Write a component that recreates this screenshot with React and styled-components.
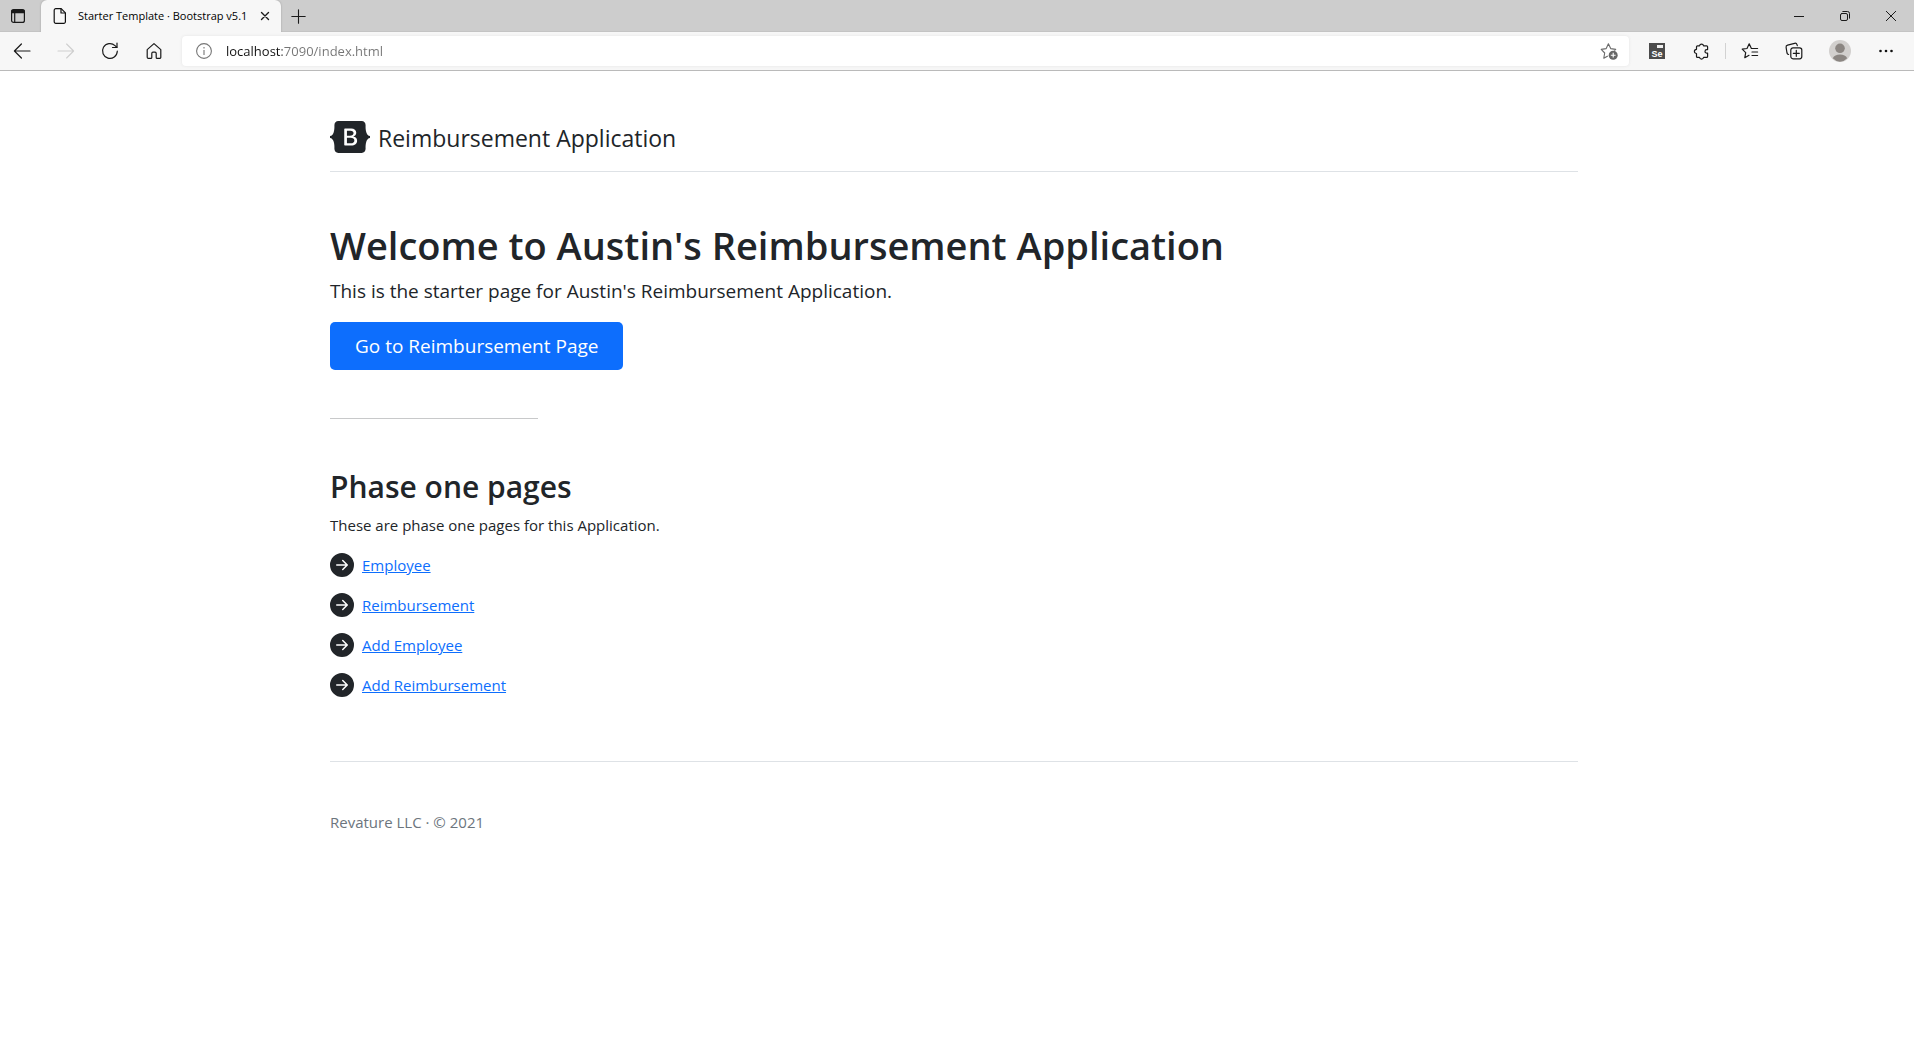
import React from "react";
import styled, { createGlobalStyle } from "styled-components";

const GlobalStyle = createGlobalStyle`
  *, *::before, *::after { box-sizing: border-box; }
  body {
    margin: 0;
    background: #fff;
    color: #212529;
    font-family: "Open Sans", "Noto Sans", sans-serif;
    font-size: 15px;
    line-height: 24px;
  }
  button, input { font: inherit; color: inherit; }
`;

/* ---------- Browser frame ---------- */

const TabStrip = styled.div`
  display: flex;
  height: 32px;
  background: #cdcdcd;
  color: #000;
  box-shadow: inset 0 -1px 0 #c4c4c4;
`;

const IconButton = styled.button`
  display: flex;
  align-items: center;
  justify-content: center;
  flex: none;
  width: ${(p) => p.$width || 44}px;
  padding: 0;
  border: 0;
  background: none;
  color: ${(p) => p.$color || "#1a1a1a"};
  svg { display: block; }
`;

const Tab = styled.div`
  display: flex;
  align-items: center;
  width: 240px;
  margin-left: 5px;
  padding-left: 12px;
  gap: 11px;
  border-radius: 6px 6px 0 0;
  background: #f7f7f7;
  box-shadow: 0 0 2px #9a9a9a;
  clip-path: inset(-2px -2px 0 -2px);
  svg { flex: none; }
`;

const TabTitle = styled.span`
  flex: 1;
  width: 0;
  overflow: visible;
  font-size: 11px;
  white-space: nowrap;
`;

const WindowControls = styled.div`
  display: flex;
  margin-left: auto;
`;

const Toolbar = styled.div`
  display: flex;
  align-items: stretch;
  height: 39px;
  padding-right: 6px;
  border-bottom: 1px solid #bababa;
  background: #f7f7f7;
`;

const AddressBar = styled.div`
  display: flex;
  align-items: center;
  flex: 1;
  height: 30px;
  margin: 4px 6px;
  padding-left: 14px;
  border-radius: 4px;
  background: #fff;
  box-shadow: 0 0 3px #e2e2e2;
`;

const Address = styled.input`
  flex: 1;
  height: 24px;
  margin-left: 14px;
  padding: 0;
  border: 0;
  outline: 0;
  font-size: 13px;
  color: #6f6f6f;
  background: linear-gradient(to right, #111 56px, #757575 56px);
  background-clip: text;
  -webkit-text-fill-color: transparent;
`;

const Separator = styled.span`
  width: 1px;
  height: 16px;
  margin: 11px 2px;
  background: #d2d2d2;
`;

const RecorderBadge = styled.span`
  display: flex;
  flex-direction: column;
  align-items: center;
  justify-content: space-between;
  width: 16px;
  height: 16px;
  padding-top: 2px;
  background: #4b4b4b;
  color: #fff;
  font-family: "Liberation Sans", sans-serif;
  font-size: 9px;
  font-weight: 700;
  line-height: 10px;
  &::before {
    content: "";
    flex: none;
    align-self: flex-end;
    width: 6px;
    height: 3px;
    margin-right: 2px;
    background: #f0f0f0;
  }
`;

const Stroke = ({ size = 16, box = 16, width = 1, children }) => (
  <svg
    width={size}
    height={size}
    viewBox={`0 0 ${box} ${box}`}
    fill="none"
    stroke="currentColor"
    strokeWidth={width}
    strokeLinecap="round"
    strokeLinejoin="round"
    aria-hidden="true"
  >
    {children}
  </svg>
);

const TabActionsIcon = () => (
  <Stroke width={1.2}>
    <rect x="1.6" y="1.6" width="12.8" height="12.8" rx="2" />
    <path d="M2 3.5h12M2 2.5h12M2 4.5h12" strokeWidth="1.4" />
    <path d="M4.7 5v9" />
  </Stroke>
);

const FileIcon = () => (
  <svg width="14" height="18" viewBox="0 0 14 18" fill="none" stroke="#111" strokeWidth="1.2" strokeLinejoin="round" aria-hidden="true">
    <path d="M2.8 1.6h5.4l4.2 4.2v9a1.6 1.6 0 0 1-1.6 1.6h-8a1.6 1.6 0 0 1-1.6-1.6V3.2a1.6 1.6 0 0 1 1.6-1.6z" />
    <path d="M8 1.8V6h4.2" />
  </svg>
);

const BackIcon = () => (
  <Stroke size={18} box={18} width={1.2}>
    <path d="M17 9H1.4M8.4 2 1.4 9l7 7" />
  </Stroke>
);

const ForwardIcon = () => (
  <Stroke size={18} box={18} width={1.1}>
    <path d="M1 9h15.6M9.6 2l7 7-7 7" />
  </Stroke>
);

const ReloadIcon = () => (
  <Stroke size={18} box={18} width={1.2}>
    <path d="M16.3 9.2A7.4 7.4 0 1 1 14 3.6l1.8 1.7" />
    <path d="M16 1v4.5h-4.5" />
  </Stroke>
);

const HomeIcon = () => (
  <Stroke size={18} box={18} width={1.2}>
    <path d="M2.2 7.6 9 1.6l6.8 6v7.6a1.2 1.2 0 0 1-1.2 1.2h-2.4a1 1 0 0 1-1-1v-4a1.2 1.2 0 0 0-1.2-1.2H8a1.2 1.2 0 0 0-1.2 1.2v4a1 1 0 0 1-1 1H3.4a1.2 1.2 0 0 1-1.2-1.2z" />
  </Stroke>
);

const InfoIcon = () => (
  <svg width="16" height="16" viewBox="0 0 16 16" fill="none" stroke="#767676" strokeWidth="1.1" aria-hidden="true">
    <circle cx="8" cy="8" r="7.4" />
    <path d="M8 7v5M8 4v1.5" />
  </svg>
);

const AddFavoriteIcon = () => (
  <svg width="18" height="18" viewBox="0 0 18 18" fill="none" stroke="#6b6b6b" strokeWidth="1.1" strokeLinejoin="round" aria-hidden="true">
    <path d="M7.8 14l-4 2.2.9-5.2L1.2 7.4l5-.8L8.4 1.8l2.3 4.8 5 .8-1.3 1.2" />
    <circle cx="13.2" cy="13.2" r="4.5" fill="#666" stroke="none" />
    <path d="M13.2 10.8v4.8M10.8 13.2h4.8" stroke="#fff" />
  </svg>
);

const ExtensionsIcon = () => (
  <Stroke size={18} box={18} width={1.2}>
    <path d="M5.5 3.8h2a2.1 2.1 0 0 1 4.1 0h3a1 1 0 0 1 1 1v2.8h-.8a1.8 1.8 0 0 0 0 3.6h.8v3.2a1 1 0 0 1-1 1h-3a2.1 2.1 0 0 1-4.1 0h-2a1 1 0 0 1-1-1v-2.9a2.1 2.1 0 0 1 0-4.2V4.8a1 1 0 0 1 1-1z" />
  </Stroke>
);

const FavoritesIcon = () => (
  <Stroke size={18} box={18} width={1.2}>
    <path d="M8 13.3l-4.2 2.4.9-5L1.2 7.2l4.8-.7L8.2 1.8l2.2 4.7h6.2M11 10h5.6M11 13.5h5.6" />
  </Stroke>
);

const CollectionsIcon = () => (
  <Stroke size={18} box={18} width={1.2}>
    <path d="M3.6 12.5A2 2 0 0 1 2 11L1.1 5.4a2 2 0 0 1 1.5-2.3l7-1.8a2 2 0 0 1 2.4 1.3l.3 1.1" />
    <rect x="5.8" y="5.8" width="11" height="11" rx="2.2" />
    <path d="M11.3 8.3v6M8.3 11.3h6" />
  </Stroke>
);

const ProfileIcon = () => (
  <svg width="22" height="22" viewBox="0 0 22 22" aria-hidden="true">
    <circle cx="11" cy="11" r="11" fill="#d2d0ce" />
    <circle cx="11" cy="8.3" r="4.8" fill="#8b8682" />
    <path d="M3.8 18.2C5 15.5 7.5 14.4 11 14.4s6 1.1 7.2 3.8A11 11 0 0 1 11 21.7a11 11 0 0 1-7.2-3.5z" fill="#8b8682" />
  </svg>
);

const MoreIcon = () => (
  <svg width="16" height="16" viewBox="0 0 16 16" fill="#111" aria-hidden="true">
    <circle cx="2.5" cy="8" r="1.3" />
    <circle cx="8" cy="8" r="1.3" />
    <circle cx="13.5" cy="8" r="1.3" />
  </svg>
);

function BrowserFrame() {
  return (
    <header>
      <TabStrip>
        <IconButton $width={36} aria-label="Tab actions"><TabActionsIcon /></IconButton>
        <Tab>
          <FileIcon />
          <TabTitle>Starter Template · Bootstrap v5.1</TabTitle>
          <IconButton $width={32} aria-label="Close tab">
            <Stroke size={10} box={10} width={1.4}><path d="M1.5 1.5l7 7M8.5 1.5l-7 7" /></Stroke>
          </IconButton>
        </Tab>
        <IconButton $width={35} aria-label="New tab">
          <Stroke size={15} box={15} width={1.1}><path d="M7.5 .8v13.4M.8 7.5h13.4" /></Stroke>
        </IconButton>
        <WindowControls>
          <IconButton $width={46} aria-label="Minimize">
            <Stroke size={10} box={10}><path d="M0 5.5h10" /></Stroke>
          </IconButton>
          <IconButton $width={46} aria-label="Restore">
            <Stroke size={10} box={10}>
              <rect x=".5" y="2.5" width="7" height="7" rx="1.5" />
              <path d="M2.8.5h4.7a2 2 0 0 1 2 2v4.7" />
            </Stroke>
          </IconButton>
          <IconButton $width={46} aria-label="Close">
            <Stroke size={10} box={10}><path d="M.3.3l9.4 9.4M9.7.3L.3 9.7" /></Stroke>
          </IconButton>
        </WindowControls>
      </TabStrip>
      <Toolbar>
        <IconButton aria-label="Back"><BackIcon /></IconButton>
        <IconButton aria-label="Forward" $color="#cfcfcf" disabled><ForwardIcon /></IconButton>
        <IconButton aria-label="Refresh"><ReloadIcon /></IconButton>
        <IconButton aria-label="Home"><HomeIcon /></IconButton>
        <AddressBar>
          <InfoIcon />
          <Address aria-label="Address" defaultValue="localhost:7090/index.html" />
          <IconButton $width={40} aria-label="Add this page to favorites"><AddFavoriteIcon /></IconButton>
        </AddressBar>
        <IconButton aria-label="Selenium IDE"><RecorderBadge>Se</RecorderBadge></IconButton>
        <IconButton aria-label="Extensions"><ExtensionsIcon /></IconButton>
        <Separator />
        <IconButton aria-label="Favorites"><FavoritesIcon /></IconButton>
        <IconButton aria-label="Collections"><CollectionsIcon /></IconButton>
        <IconButton $width={48} aria-label="Profile"><ProfileIcon /></IconButton>
        <IconButton aria-label="Settings and more"><MoreIcon /></IconButton>
      </Toolbar>
    </header>
  );
}

/* ---------- Page ---------- */

const Page = styled.div`
  padding-right: 6px;
`;

const Column = styled.div`
  max-width: 1280px;
  margin: 0 auto;
  padding: 48px 16px;
`;

const PageHeader = styled.header`
  margin-bottom: 48px;
  padding-bottom: 16px;
  border-bottom: 1px solid #dee2e6;
`;

const Brand = styled.a`
  display: flex;
  align-items: center;
  gap: 8px;
  height: 36px;
  color: #212529;
  font-size: 23px;
  line-height: 32px;
  text-decoration: none;
  svg { flex: none; }
  span { padding-top: 2px; }
`;

const Title = styled.h1`
  margin: 0 0 6px;
  font-size: 38px;
  font-weight: 600;
  line-height: 50px;
`;

const Lead = styled.p`
  margin: 0 0 16px;
  font-size: 19px;
  line-height: 30px;
`;

const PrimaryButton = styled.button`
  display: block;
  height: 48px;
  margin-bottom: 48px;
  padding: 0 25px;
  border: 0;
  border-radius: 5px;
  background: #0d6efd;
  color: #fff;
  font-size: 19px;
  line-height: 30px;
`;

const Rule = styled.hr`
  width: calc(100% / 6);
  height: 1px;
  margin: 0 0 48px;
  border: 0;
  background: #c8c9ca;
`;

const Subtitle = styled.h2`
  margin: 0 0 6px;
  font-size: 30px;
  font-weight: 600;
  line-height: 40px;
`;

const Text = styled.p`
  margin: 0 0 16px;
`;

const LinkList = styled.ul`
  display: grid;
  gap: 16px;
  margin: 0;
  padding: 0;
  list-style: none;
`;

const LinkItem = styled.li`
  display: flex;
  align-items: center;
  gap: 8px;
  height: 24px;
`;

const Link = styled.a`
  color: #0d6efd;
  text-decoration: underline;
`;

const Footer = styled.footer`
  margin-top: 64px;
  padding-top: 48px;
  border-top: 1px solid #dee2e6;
  color: #6c757d;
`;

const BootstrapLogo = () => (
  <svg width="40" height="32" viewBox="0 0 118 94" fill="currentColor" role="img" aria-label="Bootstrap">
    <path
      fillRule="evenodd"
      clipRule="evenodd"
      d="M24.509 0c-6.733 0-11.715 5.893-11.492 12.284.214 6.14-.064 14.092-2.066 20.577C8.943 39.365 5.547 43.485 0 44.014v5.972c5.547.529 8.943 4.649 10.951 11.153 2.002 6.485 2.28 14.437 2.066 20.577C12.794 88.106 17.776 94 24.51 94H93.5c6.733 0 11.714-5.893 11.491-12.284-.214-6.14.064-14.092 2.066-20.577 2.009-6.504 5.396-10.624 10.943-11.153v-5.972c-5.547-.529-8.934-4.649-10.943-11.153-2.002-6.484-2.28-14.437-2.066-20.577C105.214 5.894 100.233 0 93.5 0H24.508zM80 57.863C80 66.663 73.436 72 62.543 72H44a2 2 0 0 1-2-2V24a2 2 0 0 1 2-2h18.437c9.083 0 15.044 4.92 15.044 12.474 0 5.302-4.01 10.049-9.119 10.88v.277C75.317 46.394 80 51.21 80 57.863zM60.521 28.34H49.948v14.934h8.905c6.884 0 10.68-2.772 10.68-7.727 0-4.643-3.264-7.207-9.012-7.207zM49.948 49.2v16.458H60.91c7.167 0 10.964-2.876 10.964-8.281 0-5.406-3.903-8.178-11.425-8.178H49.948z"
    />
  </svg>
);

const ArrowCircle = () => (
  <svg width="24" height="24" viewBox="0 0 16 16" fill="#212529" aria-hidden="true">
    <path
      fillRule="evenodd"
      d="M8 0a8 8 0 1 1 0 16A8 8 0 0 1 8 0zM4.5 7.5a.5.5 0 0 0 0 1h5.793l-2.147 2.146a.5.5 0 0 0 .708.708l3-3a.5.5 0 0 0 0-.708l-3-3a.5.5 0 1 0-.708.708L10.293 7.5H4.5z"
    />
  </svg>
);

const PHASE_ONE_PAGES = ["Employee", "Reimbursement", "Add Employee", "Add Reimbursement"];

export default function App() {
  return (
    <>
      <GlobalStyle />
      <BrowserFrame />
      <Page>
        <Column>
          <PageHeader>
            <Brand href="#">
              <BootstrapLogo />
              <span>Reimbursement Application</span>
            </Brand>
          </PageHeader>
          <main>
            <Title>Welcome to Austin's Reimbursement Application</Title>
            <Lead>This is the starter page for Austin's Reimbursement Application.</Lead>
            <PrimaryButton>Go to Reimbursement Page</PrimaryButton>
            <Rule />
            <Subtitle>Phase one pages</Subtitle>
            <Text>These are phase one pages for this Application.</Text>
            <LinkList>
              {PHASE_ONE_PAGES.map((name) => (
                <LinkItem key={name}>
                  <ArrowCircle />
                  <Link href="#">{name}</Link>
                </LinkItem>
              ))}
            </LinkList>
          </main>
          <Footer>Revature LLC · © 2021</Footer>
        </Column>
      </Page>
    </>
  );
}
